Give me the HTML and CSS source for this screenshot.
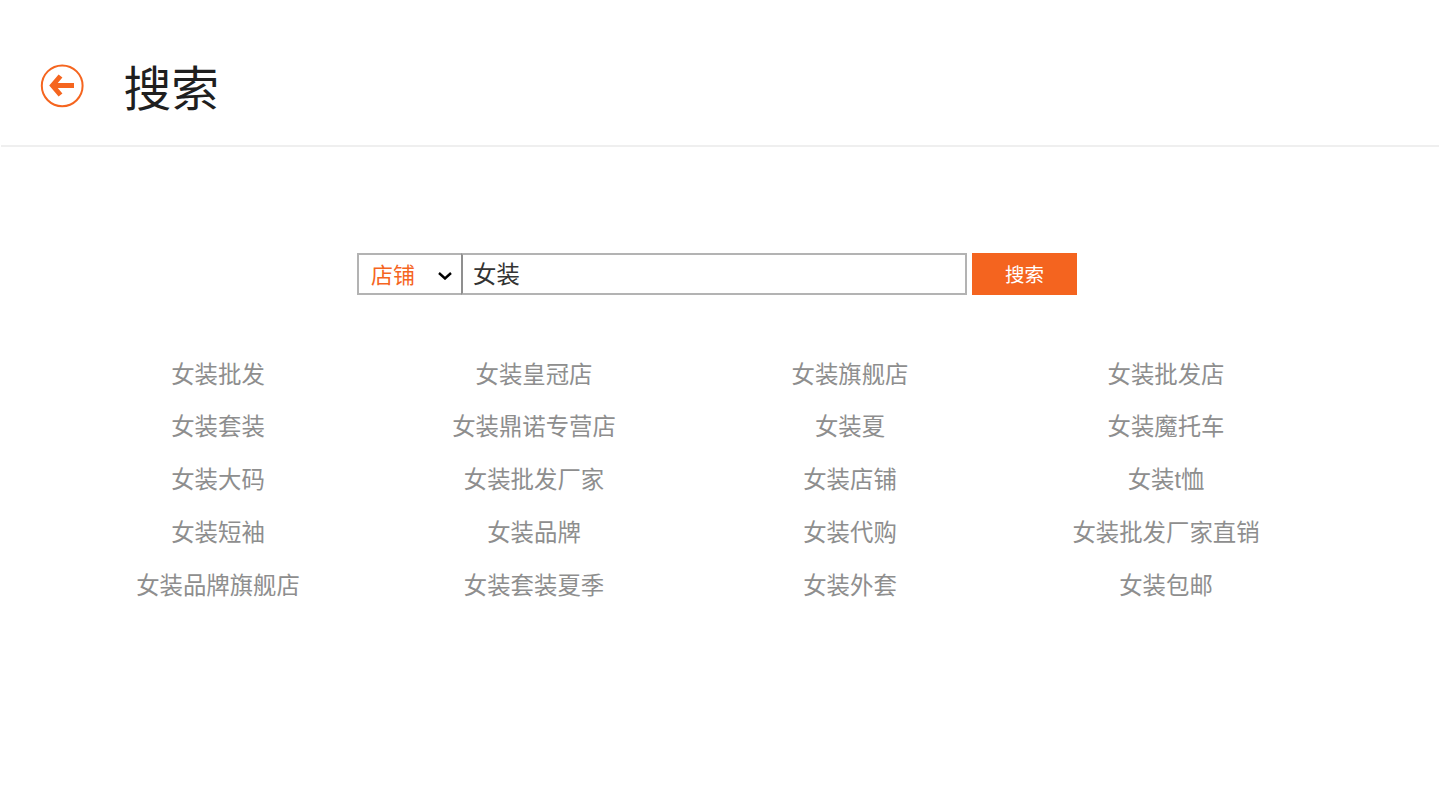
FILE: index.html
```html
<!DOCTYPE html>
<html lang="zh-CN">
<head>
<meta charset="utf-8">
<title>搜索</title>
<link rel="stylesheet" href="styles.css">
</head>
<body>
<header class="header">
  <a class="back" href="#" aria-label="返回">
    <svg width="44" height="44" viewBox="0 0 44 44" fill="none">
      <circle cx="22.2" cy="21.8" r="20.4" stroke="#f5651f" stroke-width="2"/>
      <path d="M20.5 12 L12.5 21.5 L20.5 31 M13 21.5 H34" stroke="#f5651f" stroke-width="5"/>
    </svg>
  </a>
  <h1 class="title">搜索</h1>
</header>
<main class="main">
  <form class="search">
    <div class="scope-wrap">
      <select class="scope"><option>店铺</option><option>商品</option></select>
      <svg class="caret" width="14" height="8" viewBox="0 0 14 8" fill="none">
        <path d="M1 1 L7 6.5 L13 1" stroke="#000" stroke-width="2.4"/>
      </svg>
    </div>
    <input class="query" type="text" value="女装">
    <button class="submit" type="button">搜索</button>
  </form>
  <ul class="hints">
    <li>女装批发</li><li>女装皇冠店</li><li>女装旗舰店</li><li>女装批发店</li>
    <li>女装套装</li><li>女装鼎诺专营店</li><li>女装夏</li><li>女装魔托车</li>
    <li>女装大码</li><li>女装批发厂家</li><li>女装店铺</li><li>女装t恤</li>
    <li>女装短袖</li><li>女装品牌</li><li>女装代购</li><li>女装批发厂家直销</li>
    <li>女装品牌旗舰店</li><li>女装套装夏季</li><li>女装外套</li><li>女装包邮</li>
  </ul>
</main>
</body>
</html>
```
FILE: styles.css
```css
* { box-sizing: border-box; }
html, body { margin: 0; padding: 0; }
body {
  background: #fff;
  height: 810px;
  overflow: hidden;
  font-family: "Liberation Sans", "Noto Sans CJK SC", sans-serif;
}
.header {
  height: 147px;
  margin: 0 1px;
  padding: 0 0 0 39px;
  border-bottom: 2px solid #efefef;
  display: flex;
  align-items: flex-start;
}
.back { display: block; margin-top: 64px; height: 44px; }
.title {
  margin: 55px 0 0 39.5px;
  font-size: 47.8px;
  line-height: 70px;
  font-weight: 400;
  color: #1f1f1f;
}
.main { display: flex; flex-direction: column; }
.search {
  display: flex;
  margin: 106px 0 0 357px;
  height: 42px;
}
.scope-wrap {
  position: relative;
  width: 104px;
  height: 42px;
}
.scope {
  display: block;
  width: 100%;
  height: 42px;
  padding: 2px 0 0 12px;
  border: 2px solid #b3b3b3;
  border-right: 0;
  border-radius: 0;
  background: #fff;
  color: #f5651f;
  font: inherit;
  font-size: 22px;
  outline: 0;
  appearance: none;
}
.caret {
  position: absolute;
  left: 81px;
  top: 19px;
  pointer-events: none;
}
.query {
  width: 505.5px;
  height: 42px;
  padding: 0 0 2px 10px;
  border: 2px solid #b3b3b3;
  border-left-color: #8f8f8f;
  border-radius: 0;
  color: #333;
  font: inherit;
  font-size: 23.4px;
  outline: 0;
}
.submit {
  width: 105px;
  height: 42px;
  margin-left: 5.5px;
  border: 0;
  padding: 0 0 2px;
  background: #f4641f;
  color: #fff;
  font: inherit;
  font-size: 19.5px;
}
.hints {
  list-style: none;
  margin: 53.8px 0 0 60px;
  padding: 0;
  width: 1264px;
  display: grid;
  grid-template-columns: repeat(4, 316px);
  grid-auto-rows: 52.7px;
}
.hints li {
  text-align: center;
  font-size: 23.4px;
  line-height: 52.7px;
  color: #8e8e8e;
}
```
